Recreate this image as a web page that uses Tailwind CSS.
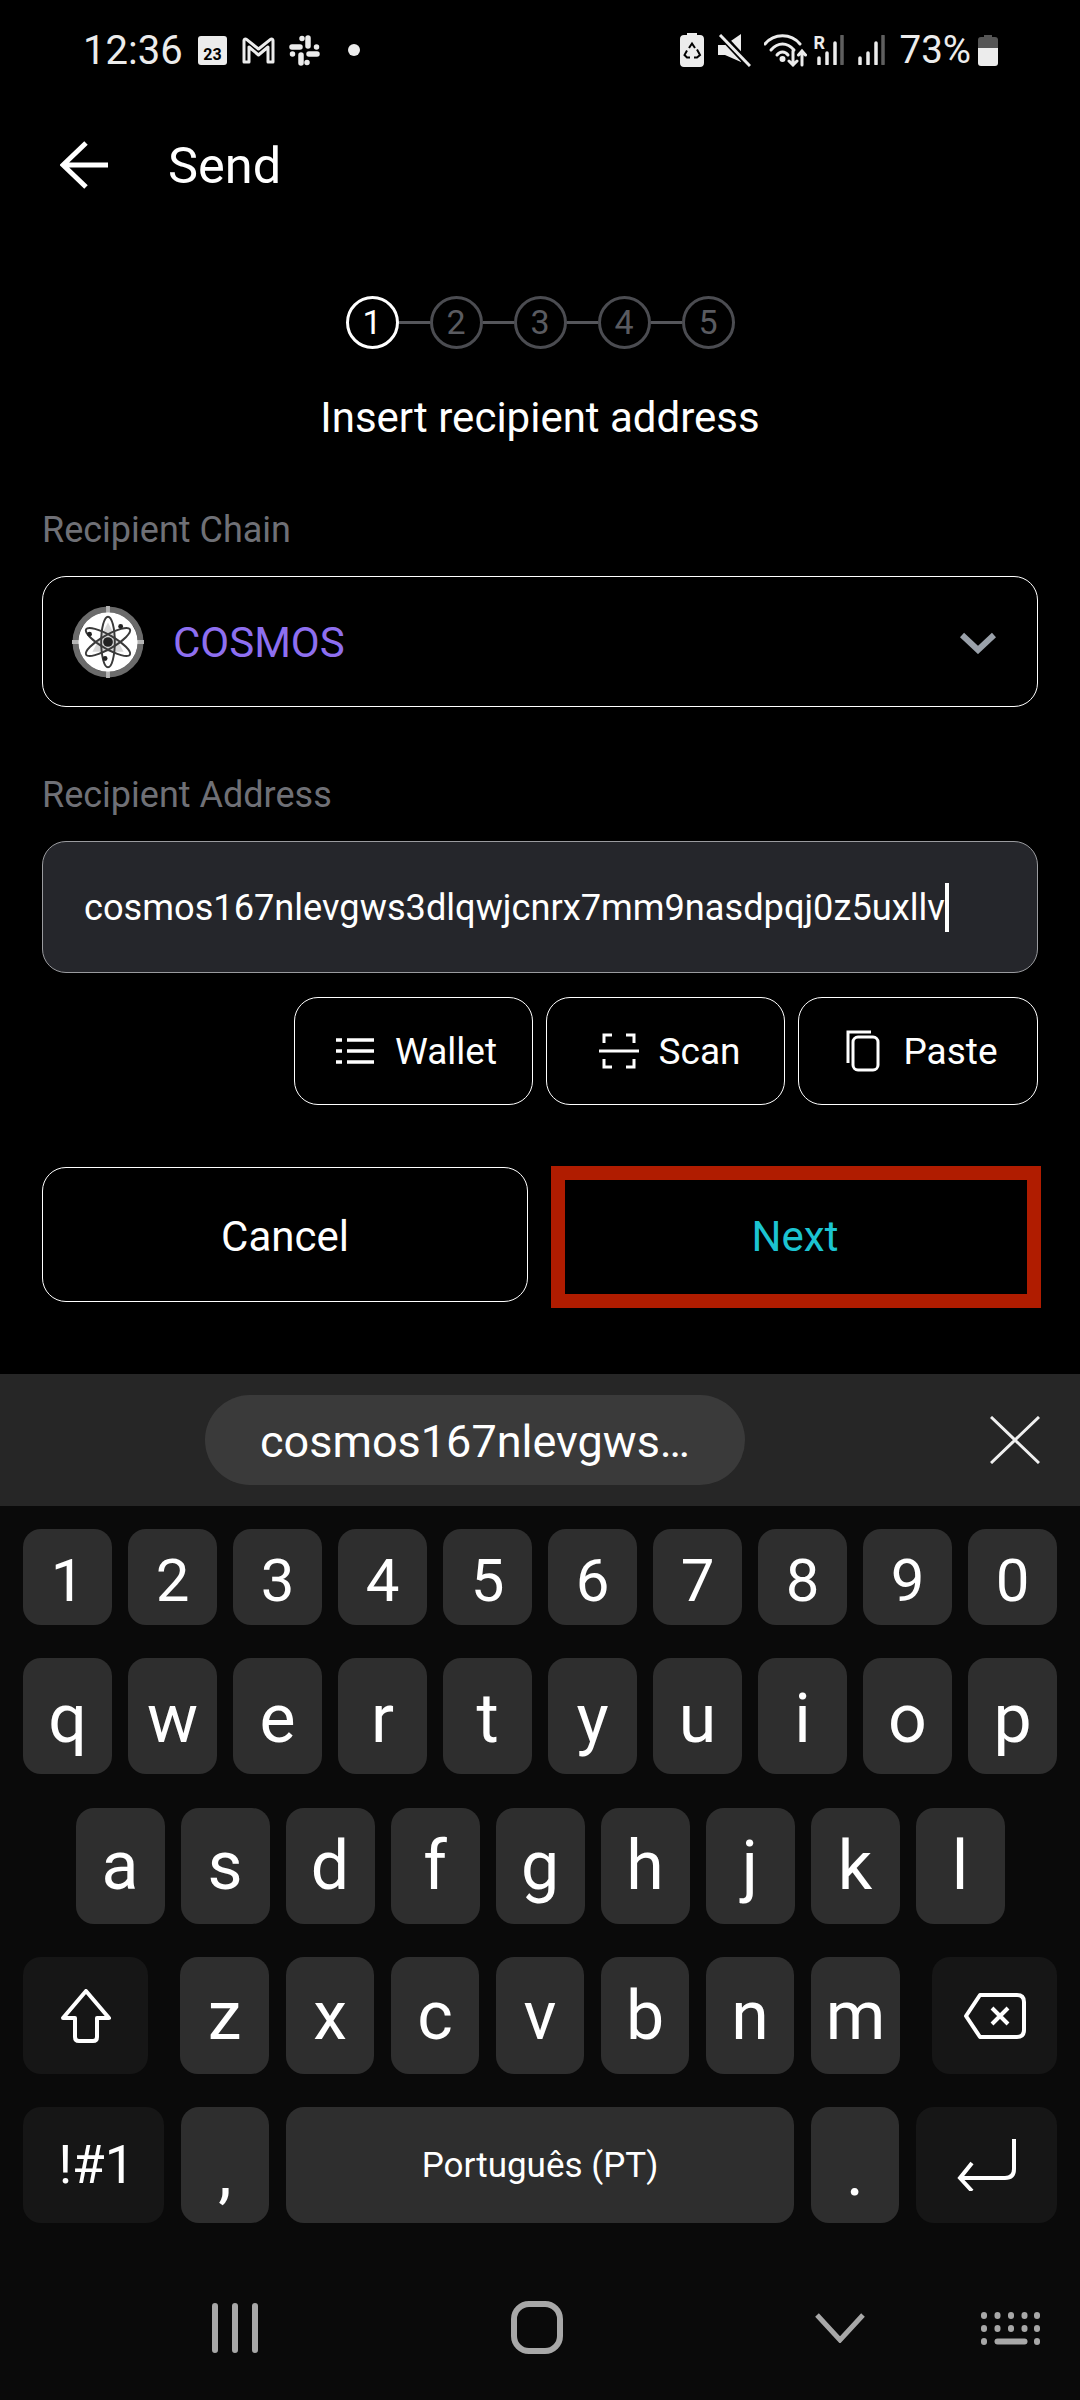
<!DOCTYPE html>
<html lang="en">
<head>
  <meta charset="UTF-8">
  <meta name="viewport" content="width=device-width, initial-scale=1.0">
  <title>Send</title>
  <script src="https://cdn.jsdelivr.net/npm/@tailwindcss/browser@4"></script>
</head>
<body class="bg-black">
<div class="w-[1080px] h-[2400px] flex flex-col bg-black text-white font-['Roboto',sans-serif] overflow-hidden">

  <!-- Status bar -->
  <div class="h-[100px] shrink-0 flex items-center pl-[83px] pr-[82px] text-[#ececec]">
    <span class="text-[40px] leading-none w-[98px] pt-[2px]">12:36</span>
    <div class="ml-[17px] w-[29px] h-[29px] bg-[#ececec] rounded-[3px] flex items-end justify-center">
      <span class="text-[16px] leading-[20px] font-bold text-black">23</span>
    </div>
    <svg class="ml-[15px]" width="33" height="27" viewBox="0 0 33 27" fill="none" stroke="#ececec" stroke-width="3" stroke-linejoin="round"><path d="M2 25V3.500C2 2 3.500 1.500 4.500 2.300L16.500 12 28.500 2.300C29.500 1.500 31 2 31 3.500V25H26V10L16.500 18 7 10V25Z"/></svg>
    <svg class="ml-[14px]" width="31" height="31" viewBox="0 0 31 31" fill="none" stroke="#ececec" stroke-width="5.500" stroke-linecap="round"><path d="M3 12H11M13 3.500V3.600M19 3V11M27.500 12V12.100M20 19H28M18 27.500V27.600M12 20V28M3.500 19V19.100"/></svg>
    <span class="ml-[28px] w-[12px] h-[12px] rounded-full bg-[#ececec]"></span>

    <svg class="ml-auto" width="24" height="34" viewBox="0 0 24 34" fill="none"><path d="M7 0H17V2H20C22.500 2 24 3.500 24 6V30C24 32.500 22.500 34 20 34H4C1.500 34 0 32.500 0 30V6C0 3.500 1.500 2 4 2H7Z" fill="#ececec"/><path d="M9 15L12 10.500 15 15M17 16.500L20 22 17 24.500H14M10 24.500H7L4.500 22 7 17.500" stroke="#000" stroke-width="2"/></svg>
    <svg class="ml-[14px]" width="33" height="33" viewBox="0 0 33 33" fill="none"><path d="M0 11H7L23 0V28L7 21H0Z" fill="#ececec"/><path d="M2 0L32 32" stroke="#000" stroke-width="7"/><path d="M2 1L32 32" stroke="#ececec" stroke-width="3"/></svg>
    <svg class="ml-[13px]" width="43" height="33" viewBox="0 0 43 33" fill="none" stroke="#ececec" stroke-width="3" stroke-linecap="round"><path d="M1 10C10 -1 27 -1 36 10"/><path d="M7 16C14 8 23 8 30 16"/><path d="M13 21C16 17 21 17 24 21"/><circle cx="18.500" cy="25" r="1.500" fill="#ececec"/><path d="M29 17V31M25 27L29 31 33 27M38 31V18M34.500 21L38 17 41.500 21"/></svg>
    <div class="relative ml-[8px] w-[29px] h-[30px]">
      <span class="absolute -left-[1px] -top-[2px] text-[18px] leading-[20px] font-bold">R</span>
      <svg class="absolute left-0 top-0" width="29" height="30" viewBox="0 0 29 30" fill="none"><path d="M4 29V23M12 29V18M20 29V8" stroke="#ececec" stroke-width="3.500" stroke-linecap="round"/><path d="M27 29V1" stroke="#5f5f5f" stroke-width="3.500" stroke-linecap="round"/></svg>
    </div>
    <svg class="ml-[14px]" width="27" height="30" viewBox="0 0 27 30" fill="none"><path d="M2 29V23M10 29V18M18 29V8" stroke="#ececec" stroke-width="3.500" stroke-linecap="round"/><path d="M25 29V1" stroke="#5f5f5f" stroke-width="3.500" stroke-linecap="round"/></svg>
    <span class="ml-[15px] text-[38.500px] leading-none">73%</span>
    <div class="ml-[7px] w-[20px] h-[31px] flex flex-col">
      <div class="mx-auto w-[8px] h-[2px] bg-[#555555]"></div>
      <div class="h-[11px] bg-[#555555] rounded-t-[3px]"></div>
      <div class="flex-1 bg-[#ececec] rounded-b-[3px]"></div>
    </div>
  </div>

  <!-- Header -->
  <div class="h-[130px] shrink-0 flex items-center pl-[60px]">
    <svg width="48" height="48" viewBox="0 0 48 48" fill="none" stroke="#fff" stroke-width="5"><path d="M48 24H3M26 2L3 24 26 46"/></svg>
    <span class="ml-[60px] text-[50.500px] leading-none pt-[3px]">Send</span>
  </div>

  <main class="px-[42px]">
    <!-- Stepper -->
    <div class="mt-[66px] h-[53px] flex items-center justify-center text-[#5a5b60] text-[34px]">
      <div class="w-[53px] h-[53px] rounded-full border-[3px] border-white text-white flex items-center justify-center">1</div>
      <div class="w-[31px] h-[3px] bg-[#55565b]"></div>
      <div class="w-[53px] h-[53px] rounded-full border-[3px] border-[#4b4c51] flex items-center justify-center">2</div>
      <div class="w-[31px] h-[3px] bg-[#55565b]"></div>
      <div class="w-[53px] h-[53px] rounded-full border-[3px] border-[#4b4c51] flex items-center justify-center">3</div>
      <div class="w-[31px] h-[3px] bg-[#55565b]"></div>
      <div class="w-[53px] h-[53px] rounded-full border-[3px] border-[#4b4c51] flex items-center justify-center">4</div>
      <div class="w-[31px] h-[3px] bg-[#55565b]"></div>
      <div class="w-[53px] h-[53px] rounded-full border-[3px] border-[#4b4c51] flex items-center justify-center">5</div>
    </div>

    <p class="mt-[41px] text-center text-[42px] leading-[56px]">Insert recipient address</p>

    <!-- Recipient chain -->
    <p class="mt-[62px] text-[36px] leading-[44px] text-[#6f7076]">Recipient Chain</p>
    <div class="mt-[24px] h-[131px] rounded-[24px] border border-white flex items-center pl-[29px] pr-[41px]">
      <svg width="72" height="72" viewBox="0 0 74 74" fill="none">
        <circle cx="37" cy="37" r="33.500" stroke="#6b6b6b" stroke-width="6"/>
        <path d="M37 0V7M37 67V74M0 37H7M67 37H74" stroke="#b5b5b5" stroke-width="4"/>
        <circle cx="37" cy="37" r="30.500" fill="#fff"/>
        <path d="M37 17L53 47H21Z" fill="#d8d8d8"/>
        <g stroke="#3a3a3a" stroke-width="2">
          <ellipse cx="37" cy="37" rx="7" ry="26"/>
          <ellipse cx="37" cy="37" rx="7" ry="26" transform="rotate(60 37 37)"/>
          <ellipse cx="37" cy="37" rx="7" ry="26" transform="rotate(-60 37 37)"/>
        </g>
        <circle cx="37" cy="37" r="5" fill="#222"/>
        <circle cx="18" cy="29" r="2.500" fill="#222"/>
        <circle cx="50" cy="21" r="2.500" fill="#222"/>
        <circle cx="34" cy="54" r="2.500" fill="#222"/>
      </svg>
      <span class="ml-[29px] text-[42px] leading-none pt-[2px] text-[#8e6ff0]">COSMOS</span>
      <svg class="ml-auto mt-[2px]" width="36" height="22" viewBox="0 0 36 22" fill="none" stroke="#9aa1aa" stroke-width="6"><path d="M2 3L18 18 34 3"/></svg>
    </div>

    <!-- Recipient address -->
    <p class="mt-[66px] text-[36px] leading-[44px] text-[#6f7076]">Recipient Address</p>
    <div class="mt-[24px] h-[132px] rounded-[24px] border border-[#9a9b9f] bg-[#25262b] flex items-center pl-[41px]">
      <span class="text-[36.200px] leading-none whitespace-nowrap pt-[2px]">cosmos167nlevgws3dlqwjcnrx7mm9nasdpqj0z5uxllv</span>
      <span class="w-[4px] h-[49px] bg-white"></span>
    </div>

    <!-- Address actions -->
    <div class="mt-[24px] flex justify-end gap-[13px] text-[37px]">
      <button class="w-[239px] h-[108px] rounded-[24px] border border-white flex items-center justify-center gap-[21px] pl-[6px]">
        <svg width="38" height="26" viewBox="0 0 38 26" fill="none" stroke="#fff" stroke-width="3.500"><path d="M0 2H6M11 2H38M0 13H6M11 13H38M0 24H6M11 24H38"/></svg>
        <span class="pt-[2px]">Wallet</span>
      </button>
      <button class="w-[239px] h-[108px] rounded-[24px] border border-white flex items-center justify-center gap-[20px] pl-[8px]">
        <svg width="40" height="36" viewBox="0 0 40 36" fill="none" stroke="#fff" stroke-width="3"><path d="M5 10V2H13M27 2H35V10M0 18H40M5 26V34H13M27 34H35V26"/></svg>
        <span class="pt-[2px]">Scan</span>
      </button>
      <button class="w-[240px] h-[108px] rounded-[24px] border border-white flex items-center justify-center gap-[23px] pl-[8px]">
        <svg width="34" height="42" viewBox="0 0 34 42" fill="none" stroke="#fff" stroke-width="3"><path d="M2 33V2H25"/><rect x="7" y="7" width="25" height="33" rx="5"/></svg>
        <span class="pt-[2px]">Paste</span>
      </button>
    </div>

    <!-- Cancel / Next -->
    <div class="mt-[62px] flex gap-[24px] text-[42px]">
      <button class="w-[486px] h-[135px] rounded-[24px] border border-white pt-[4px]">Cancel</button>
      <div class="relative w-[486px] h-[135px] flex items-center justify-center pt-[4px] text-[#1cc4d2]">
        Next
        <div class="absolute -top-[1px] -left-[1px] -right-[3px] -bottom-[6px] border-[14px] border-[#b01c00]"></div>
      </div>
    </div>
  </main>

  <!-- Keyboard -->
  <div class="mt-auto h-[1026px] shrink-0 bg-[#0a0a0a] flex flex-col">
    <div class="h-[132px] bg-[#262626] flex items-center">
      <div class="ml-[205px] w-[540px] h-[90px] rounded-full bg-[#3a3a3a] flex items-center justify-center text-[45px] pt-[3px]">cosmos167nlevgws…</div>
      <svg class="ml-[245px]" width="50" height="48" viewBox="0 0 50 48" fill="none" stroke="#f0f0f0" stroke-width="3"><path d="M1 1L49 47M49 1L1 47"/></svg>
    </div>

    <div class="mt-[23px] px-[23px] flex flex-col gap-[33px] text-[68px] leading-none">
      <div class="h-[96px] flex gap-[16px] text-[60px]">
        <div class="w-[89px] pt-[8px] rounded-[18px] bg-[#2e2e2e] flex items-center justify-center">1</div>
        <div class="w-[89px] pt-[8px] rounded-[18px] bg-[#2e2e2e] flex items-center justify-center">2</div>
        <div class="w-[89px] pt-[8px] rounded-[18px] bg-[#2e2e2e] flex items-center justify-center">3</div>
        <div class="w-[89px] pt-[8px] rounded-[18px] bg-[#2e2e2e] flex items-center justify-center">4</div>
        <div class="w-[89px] pt-[8px] rounded-[18px] bg-[#2e2e2e] flex items-center justify-center">5</div>
        <div class="w-[89px] pt-[8px] rounded-[18px] bg-[#2e2e2e] flex items-center justify-center">6</div>
        <div class="w-[89px] pt-[8px] rounded-[18px] bg-[#2e2e2e] flex items-center justify-center">7</div>
        <div class="w-[89px] pt-[8px] rounded-[18px] bg-[#2e2e2e] flex items-center justify-center">8</div>
        <div class="w-[89px] pt-[8px] rounded-[18px] bg-[#2e2e2e] flex items-center justify-center">9</div>
        <div class="w-[89px] pt-[8px] rounded-[18px] bg-[#2e2e2e] flex items-center justify-center">0</div>
      </div>
      <div class="h-[116px] flex gap-[16px]">
        <div class="w-[89px] pt-[6px] rounded-[18px] bg-[#2e2e2e] flex items-center justify-center">q</div>
        <div class="w-[89px] pt-[6px] rounded-[18px] bg-[#2e2e2e] flex items-center justify-center">w</div>
        <div class="w-[89px] pt-[6px] rounded-[18px] bg-[#2e2e2e] flex items-center justify-center">e</div>
        <div class="w-[89px] pt-[6px] rounded-[18px] bg-[#2e2e2e] flex items-center justify-center">r</div>
        <div class="w-[89px] pt-[6px] rounded-[18px] bg-[#2e2e2e] flex items-center justify-center">t</div>
        <div class="w-[89px] pt-[6px] rounded-[18px] bg-[#2e2e2e] flex items-center justify-center">y</div>
        <div class="w-[89px] pt-[6px] rounded-[18px] bg-[#2e2e2e] flex items-center justify-center">u</div>
        <div class="w-[89px] pt-[6px] rounded-[18px] bg-[#2e2e2e] flex items-center justify-center">i</div>
        <div class="w-[89px] pt-[6px] rounded-[18px] bg-[#2e2e2e] flex items-center justify-center">o</div>
        <div class="w-[89px] pt-[6px] rounded-[18px] bg-[#2e2e2e] flex items-center justify-center">p</div>
      </div>
      <div class="mt-[1px] h-[116px] flex justify-center gap-[16px]">
        <div class="w-[89px] rounded-[18px] bg-[#2e2e2e] flex items-center justify-center">a</div>
        <div class="w-[89px] rounded-[18px] bg-[#2e2e2e] flex items-center justify-center">s</div>
        <div class="w-[89px] rounded-[18px] bg-[#2e2e2e] flex items-center justify-center">d</div>
        <div class="w-[89px] rounded-[18px] bg-[#2e2e2e] flex items-center justify-center">f</div>
        <div class="w-[89px] rounded-[18px] bg-[#2e2e2e] flex items-center justify-center">g</div>
        <div class="w-[89px] rounded-[18px] bg-[#2e2e2e] flex items-center justify-center">h</div>
        <div class="w-[89px] rounded-[18px] bg-[#2e2e2e] flex items-center justify-center">j</div>
        <div class="w-[89px] rounded-[18px] bg-[#2e2e2e] flex items-center justify-center">k</div>
        <div class="w-[89px] rounded-[18px] bg-[#2e2e2e] flex items-center justify-center">l</div>
      </div>
      <div class="h-[117px] flex gap-[17px]">
        <div class="w-[125px] mr-[15px] rounded-[18px] bg-[#161616] flex items-center justify-center">
          <svg width="50" height="54" viewBox="0 0 50 54" fill="none" stroke="#fff" stroke-width="4" stroke-linejoin="round"><path d="M25 2L48 29H36V48C36 50.500 34.500 52 32 52H18C15.500 52 14 50.500 14 48V29H2Z"/></svg>
        </div>
        <div class="w-[89px] rounded-[18px] bg-[#2e2e2e] flex items-center justify-center">z</div>
        <div class="w-[88px] rounded-[18px] bg-[#2e2e2e] flex items-center justify-center">x</div>
        <div class="w-[88px] rounded-[18px] bg-[#2e2e2e] flex items-center justify-center">c</div>
        <div class="w-[88px] rounded-[18px] bg-[#2e2e2e] flex items-center justify-center">v</div>
        <div class="w-[88px] rounded-[18px] bg-[#2e2e2e] flex items-center justify-center">b</div>
        <div class="w-[88px] rounded-[18px] bg-[#2e2e2e] flex items-center justify-center">n</div>
        <div class="w-[89px] rounded-[18px] bg-[#2e2e2e] flex items-center justify-center">m</div>
        <div class="w-[125px] ml-[15px] rounded-[18px] bg-[#161616] flex items-center justify-center">
          <svg width="62" height="46" viewBox="0 0 62 46" fill="none" stroke="#fff" stroke-width="4" stroke-linejoin="round"><path d="M16 2H53C57.500 2 60 4.500 60 9V37C60 41.500 57.500 44 53 44H16L2 23Z"/><path d="M28 15L44 31M44 15L28 31" stroke-width="4"/></svg>
        </div>
      </div>
      <div class="h-[116px] flex gap-[17px]">
        <div class="w-[141px] pl-[6px] rounded-[18px] bg-[#161616] flex items-center justify-center text-[53px]">!#1</div>
        <div class="w-[88px] rounded-[18px] bg-[#2e2e2e] flex items-end justify-center pb-[17px]">,</div>
        <div class="w-[508px] rounded-[18px] bg-[#2e2e2e] flex items-center justify-center text-[35px]">Português (PT)</div>
        <div class="w-[88px] rounded-[18px] bg-[#2e2e2e] flex items-end justify-center pb-[17px]">.</div>
        <div class="w-[141px] rounded-[18px] bg-[#161616] flex items-center justify-center">
          <svg width="60" height="52" viewBox="0 0 60 52" fill="none" stroke="#fff" stroke-width="4"><path d="M57 0V30C57 36 54 39 48 39H4M15 24L3 39 15 52"/></svg>
        </div>
      </div>
    </div>

    <!-- Navigation bar -->
    <div class="flex-1 flex items-start pl-[212px] pt-[80px]">
      <svg width="46" height="50" viewBox="0 0 46 50" fill="none" stroke="#a8a8a8" stroke-width="6" stroke-linecap="round"><path d="M3 3V47M23 3V47M43 3V47"/></svg>
      <svg class="ml-[253px] -mt-[2px]" width="52" height="53" viewBox="0 0 52 53" fill="none" stroke="#a8a8a8" stroke-width="6"><rect x="3" y="3" width="46" height="47" rx="15"/></svg>
      <svg class="ml-[252px] mt-[10px]" width="50" height="30" viewBox="0 0 50 30" fill="none" stroke="#a8a8a8" stroke-width="5"><path d="M2 2L25 27 48 2"/></svg>
      <svg class="ml-[116px] mt-[9px]" width="59" height="33" viewBox="0 0 59 33" fill="#a8a8a8"><rect x="0" y="0" width="6" height="7" rx="3"/><rect x="13.500" y="0" width="6" height="7" rx="3"/><rect x="27" y="0" width="6" height="7" rx="3"/><rect x="40.500" y="0" width="6" height="7" rx="3"/><rect x="53" y="0" width="6" height="7" rx="3"/><rect x="0" y="13" width="6" height="7" rx="3"/><rect x="13.500" y="13" width="6" height="7" rx="3"/><rect x="27" y="13" width="6" height="7" rx="3"/><rect x="40.500" y="13" width="6" height="7" rx="3"/><rect x="53" y="13" width="6" height="7" rx="3"/><rect x="0" y="26" width="6" height="7" rx="3"/><rect x="13.500" y="26.500" width="33" height="6" rx="3"/><rect x="53" y="26" width="6" height="7" rx="3"/></svg>
    </div>
  </div>
</div>
</body>
</html>
